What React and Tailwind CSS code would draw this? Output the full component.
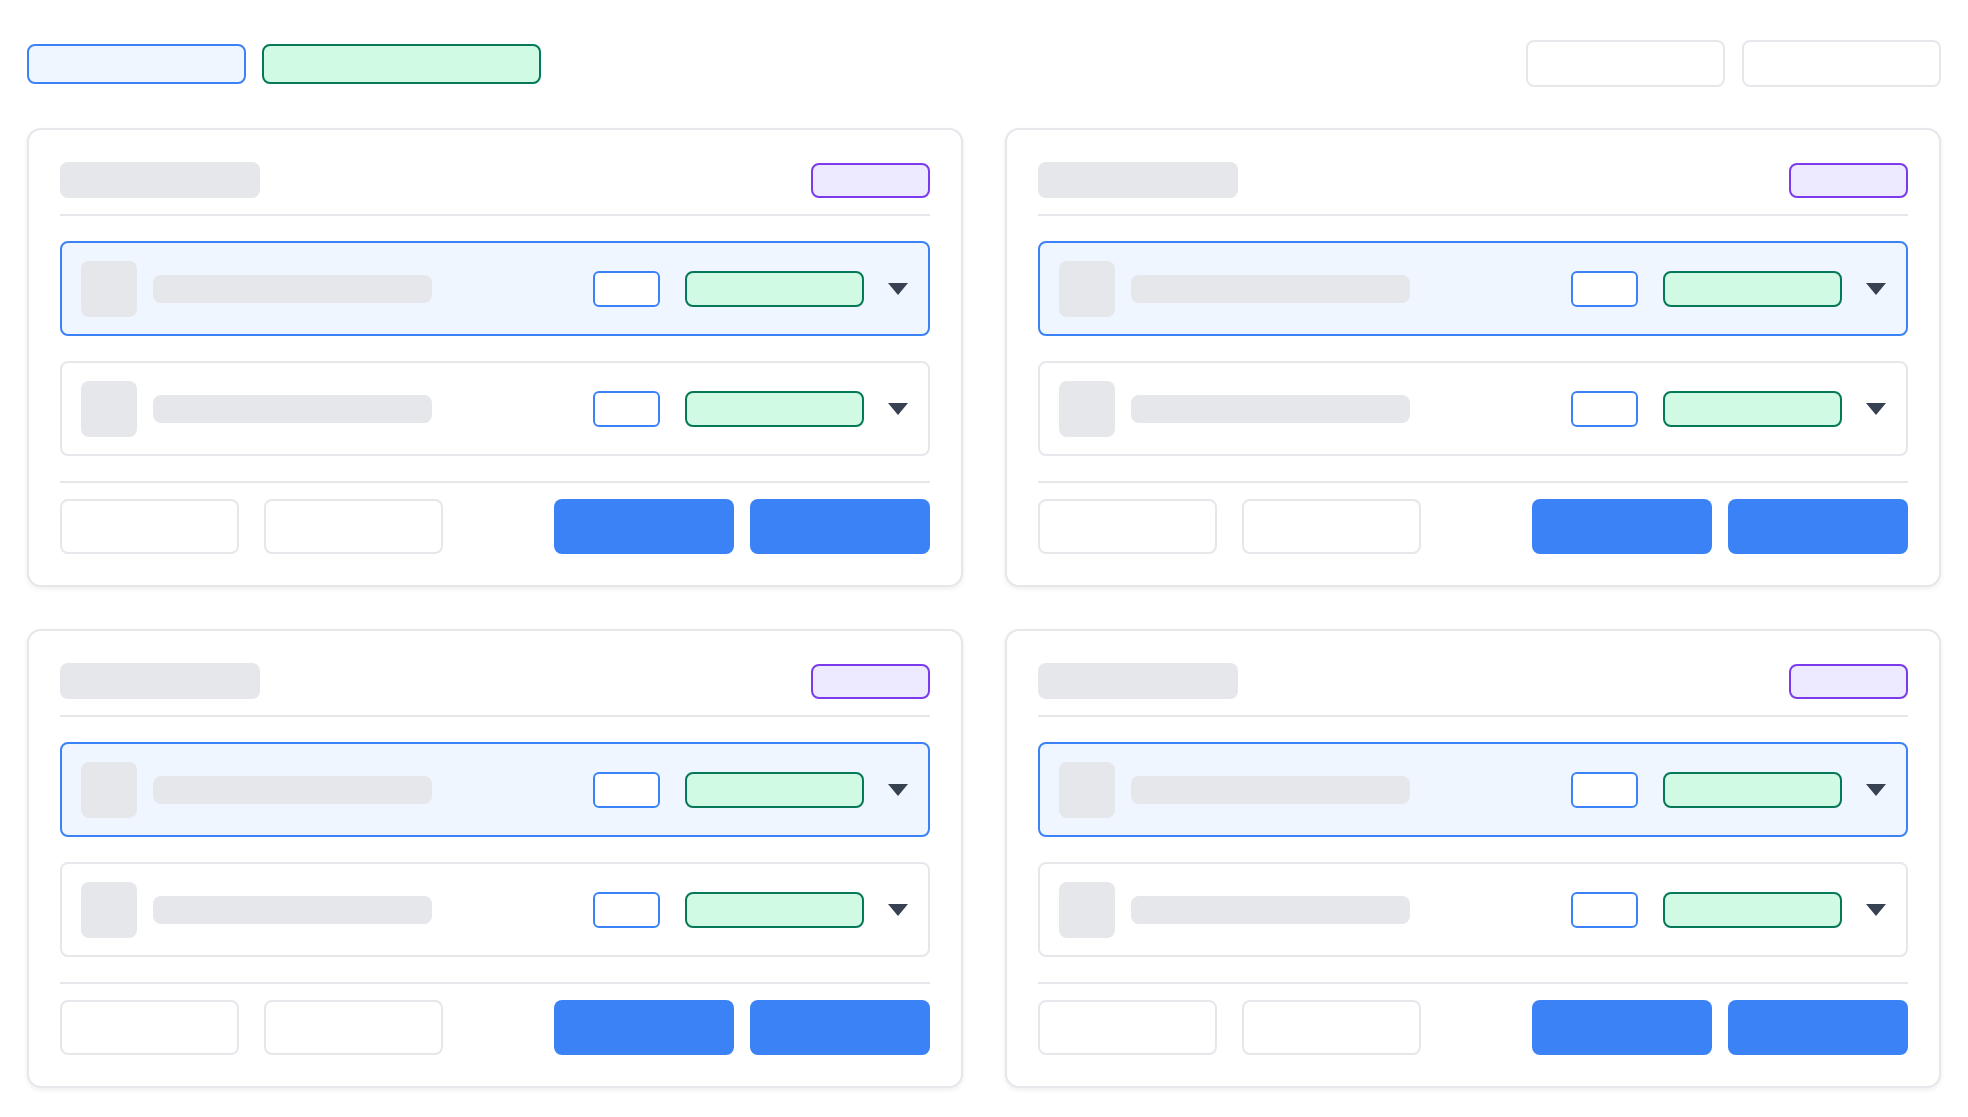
import React from "react";

function Caret() {
  return (
    <svg width="20" height="12" viewBox="0 0 20 12" className="ml-[24px] shrink-0">
      <path d="M0 0 L20 0 L10 12 Z" fill="#374151" />
    </svg>
  );
}

function Row({ active }) {
  return (
    <div
      className={
        active
          ? "flex h-[95px] items-center rounded-[8px] border-2 border-[#3b82f6] bg-[#eff6ff] pl-[19px] pr-[20px]"
          : "flex h-[95px] items-center rounded-[8px] border-2 border-[#e5e7eb] bg-white pl-[19px] pr-[20px]"
      }
    >
      <div className="h-[56px] w-[56px] shrink-0 rounded-[8px] bg-[#e5e7eb]" />
      <div className="ml-[16px] h-[28px] w-[279px] rounded-[8px] bg-[#e5e7eb]" />
      <div className="ml-auto h-[36px] w-[67px] rounded-[6px] border-2 border-[#3b82f6] bg-white" />
      <div className="ml-[25px] h-[36px] w-[179px] rounded-[8px] border-2 border-[#047857] bg-[#d1fae5]" />
      <Caret />
    </div>
  );
}

function Card() {
  return (
    <div className="rounded-[14px] border-2 border-[#e5e7eb] bg-white px-[31px] pb-[31px] pt-[32px] shadow-[0_2px_5px_rgba(0,0,0,0.07)]">
      <div className="flex h-[36px] items-center justify-between">
        <div className="h-[36px] w-[200px] rounded-[8px] bg-[#e5e7eb]" />
        <div className="h-[35px] w-[119px] rounded-[8px] border-2 border-[#7c3aed] bg-[#ede9fe]" />
      </div>
      <div className="mt-[16px] h-[2px] bg-[#e5e7eb]" />

      <div className="mt-[25px] flex flex-col gap-[25px]">
        <Row active />
        <Row />
      </div>

      <div className="mt-[25px] h-[2px] bg-[#e5e7eb]" />
      <div className="mt-[16px] flex items-center justify-between">
        <div className="flex gap-[25px]">
          <div className="h-[55px] w-[179px] rounded-[8px] border-2 border-[#e5e7eb] bg-white" />
          <div className="h-[55px] w-[179px] rounded-[8px] border-2 border-[#e5e7eb] bg-white" />
        </div>
        <div className="flex gap-[16px]">
          <div className="h-[55px] w-[180px] rounded-[8px] bg-[#3b82f6]" />
          <div className="h-[55px] w-[180px] rounded-[8px] bg-[#3b82f6]" />
        </div>
      </div>
    </div>
  );
}

export default function App() {
  return (
    <div className="min-h-screen bg-white px-[27px] pb-[30px] pt-[40px] font-['Inter',sans-serif]">
      <div className="flex h-[47px] items-center justify-between">
        <div className="flex gap-[16px]">
          <div className="h-[40px] w-[219px] rounded-[8px] border-2 border-[#3b82f6] bg-[#eff6ff]" />
          <div className="h-[40px] w-[279px] rounded-[8px] border-2 border-[#047857] bg-[#d1fae5]" />
        </div>
        <div className="flex gap-[17px]">
          <div className="h-[47px] w-[199px] rounded-[8px] border-2 border-[#e5e7eb] bg-white" />
          <div className="h-[47px] w-[199px] rounded-[8px] border-2 border-[#e5e7eb] bg-white" />
        </div>
      </div>

      <div className="mt-[41px] grid grid-cols-2 gap-x-[42px] gap-y-[42px]">
        <Card />
        <Card />
        <Card />
        <Card />
      </div>
    </div>
  );
}
